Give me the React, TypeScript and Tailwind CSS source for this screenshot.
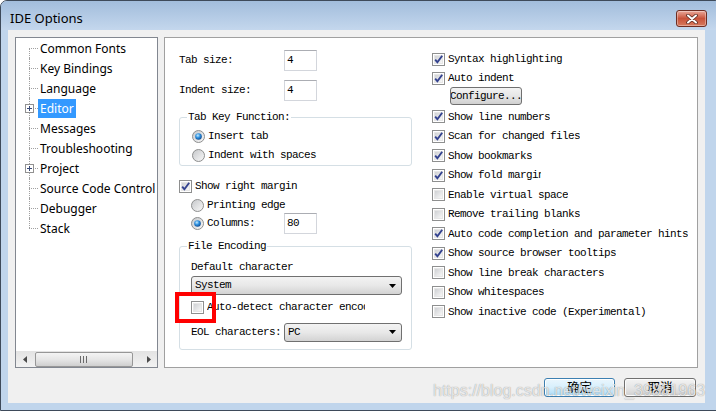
import React from "react";

const mono = "font-['Liberation_Mono',monospace] text-[11px] tracking-[-0.6px] text-black";
const ui = "font-['Noto_Sans',sans-serif]";

function CheckBox({ checked }: { checked?: boolean }) {
  return (
    <span className="relative flex h-[13px] w-[13px] shrink-0 items-center justify-center border border-[#8e8f8f] bg-white">
      <span className="h-[9px] w-[9px] border border-[#e6e6e6] bg-linear-to-br from-[#cfd1d4] to-[#f7f7f7]" />
      {checked && (
        <svg className="absolute left-[0px] top-[0px]" width="11" height="11" viewBox="0 0 11 11">
          <path d="M2.2 5.6 L4.4 8.3 L9.2 1.8" fill="none" stroke="#33428f" strokeWidth="1.9" />
        </svg>
      )}
    </span>
  );
}

function Radio({ checked }: { checked?: boolean }) {
  return (
    <svg width="13" height="13" viewBox="0 0 13 13" className="shrink-0">
      <defs>
        <linearGradient id="rg" x1="0" y1="0" x2="1" y2="1">
          <stop offset="0" stopColor="#c4c6c9" />
          <stop offset="1" stopColor="#fafafa" />
        </linearGradient>
        <radialGradient id="rd" cx="0.4" cy="0.35" r="0.75">
          <stop offset="0" stopColor="#c5ecff" />
          <stop offset="0.45" stopColor="#2b8fe0" />
          <stop offset="1" stopColor="#0b3a7a" />
        </radialGradient>
      </defs>
      <circle cx="6.5" cy="6.5" r="6" fill="url(#rg)" stroke="#8e8f8f" />
      {checked && <circle cx="6.5" cy="6.5" r="3.3" fill="url(#rd)" />}
    </svg>
  );
}

function NumBox({ value }: { value: string }) {
  return (
    <div className={`flex h-[21px] w-[33px] items-center border border-[#d3d6dc] border-t-[#abadb3] bg-white pl-[2px] ${mono}`}>
      {value}
    </div>
  );
}

function Combo({ value, w }: { value: string; w: string }) {
  return (
    <div
      className={`flex h-[19px] ${w} items-center justify-between rounded-[3px] border border-[#707070] bg-linear-to-b from-[#f3f3f3] via-[#e8e8e8] to-[#d3d3d3] pl-[3px] pr-[5px] ${mono}`}
    >
      <span>{value}</span>
      <svg width="7" height="4" viewBox="0 0 7 4">
        <path d="M0 0h7L3.5 4z" fill="#000" />
      </svg>
    </div>
  );
}

function Fieldset({ label, className, children }: { label: string; className?: string; children: React.ReactNode }) {
  return (
    <fieldset className={`rounded-[3px] border border-[#d5dfe5] ${className ?? ""}`}>
      <legend className={`ml-[7px] px-[1px] leading-[13px] ${mono}`}>{label}</legend>
      {children}
    </fieldset>
  );
}

const tree = [
  { label: "Common Fonts" },
  { label: "Key Bindings" },
  { label: "Language" },
  { label: "Editor", plus: true, selected: true },
  { label: "Messages" },
  { label: "Troubleshooting" },
  { label: "Project", plus: true },
  { label: "Source Code Control" },
  { label: "Debugger" },
  { label: "Stack" },
];

function Tree() {
  return (
    <div className="flex w-[143px] shrink-0 flex-col border border-[#828790] bg-white">
      <div className={`flex-1 overflow-hidden ${ui} text-[12px]`}>
        {tree.map((t, i) => {
          const vline =
            i === 0 ? "top-1/2 bottom-0" : i === tree.length - 1 ? "top-0 h-1/2" : "inset-y-0";
          return (
            <div key={t.label} className="flex h-5 items-center whitespace-nowrap">
              <div className="relative h-full w-[22px] shrink-0">
                <span className={`absolute left-[13px] border-l border-dotted border-[#a0a0a0] ${vline}`} />
                <span className="absolute left-[13px] top-1/2 w-[9px] border-t border-dotted border-[#a0a0a0]" />
                {t.plus && (
                  <svg className="absolute left-[9px] top-[6px]" width="9" height="9" viewBox="0 0 9 9">
                    <rect x="0.5" y="0.5" width="8" height="8" fill="#fff" stroke="#919191" />
                    <path d="M2 4.5h5M4.5 2v5" stroke="#3a4a78" />
                  </svg>
                )}
              </div>
              <span
                className={
                  t.selected
                    ? "bg-[#3399ff] px-[2px] leading-[19px] text-white"
                    : "px-[2px] leading-[19px] text-black"
                }
              >
                {t.label}
              </span>
            </div>
          );
        })}
      </div>
      <div className="flex h-[16px] shrink-0 items-center bg-linear-to-b from-[#e3e3e3] to-[#f2f2f2]">
        <div className="flex h-full w-[17px] items-center justify-center">
          <svg width="4" height="7" viewBox="0 0 4 7">
            <path d="M4 0v7L0 3.5z" fill="#4a4a4a" />
          </svg>
        </div>
        <div className="ml-[2px] flex h-[15px] w-[98px] items-center justify-center rounded-[2px] border border-[#979797] bg-linear-to-b from-[#f4f4f4] via-[#e6e6e6] to-[#cfcfcf]">
          <svg width="8" height="7" viewBox="0 0 8 7">
            <path d="M0.5 0v7M3.5 0v7M6.5 0v7" stroke="#6a6a6a" />
          </svg>
        </div>
        <div className="flex-1" />
        <div className="flex h-full w-[17px] items-center justify-center">
          <svg width="4" height="7" viewBox="0 0 4 7">
            <path d="M0 0v7L4 3.5z" fill="#4a4a4a" />
          </svg>
        </div>
      </div>
    </div>
  );
}

function LeftColumn() {
  return (
    <div className="flex w-[233px] shrink-0 flex-col">
      <div className="flex h-[22px] items-center">
        <span className={`w-[105px] ${mono}`}>Tab size:</span>
        <NumBox value="4" />
      </div>
      <div className="mt-[8px] flex h-[22px] items-center">
        <span className={`w-[105px] ${mono}`}>Indent size:</span>
        <NumBox value="4" />
      </div>
      <Fieldset label="Tab Key Function:" className="mt-[10px]">
        <div className="pl-[12px] pt-[3px]">
          <div className="flex h-[19px] items-center gap-[3px]">
            <Radio checked />
            <span className={mono}>Insert tab</span>
          </div>
          <div className="flex h-[19px] items-center gap-[3px]">
            <Radio />
            <span className={mono}>Indent with spaces</span>
          </div>
        </div>
      </Fieldset>
      <div className="mt-[11px] flex h-[19px] items-center gap-[3px]">
        <CheckBox checked />
        <span className={mono}>Show right margin</span>
      </div>
      <div className="flex h-[18px] items-center gap-[3px] pl-[12px]">
        <Radio />
        <span className={mono}>Printing edge</span>
      </div>
      <div className="flex h-[18px] items-center">
        <div className="flex w-[105px] items-center gap-[3px] pl-[12px]">
          <Radio checked />
          <span className={mono}>Columns:</span>
        </div>
        <NumBox value="80" />
      </div>
      <Fieldset label="File Encoding" className="mt-[8px]">
        <div className="pb-[7px] pl-[11px]">
          <div className={`mt-[6px] flex h-[16px] items-center ${mono}`}>Default character</div>
          <div className="mt-[1px]">
            <Combo value="System" w="w-[211px]" />
          </div>
          <div className="relative mt-[3px] flex h-[19px] w-[174px] items-center gap-[3px] overflow-visible">
            <CheckBox />
            <span className={`overflow-hidden whitespace-nowrap ${mono}`}>Auto-detect character encoding</span>
            <span className="pointer-events-none absolute left-[-16px] top-[-6px] h-[31px] w-[41px] border-[4px] border-[#ff0000]" />
          </div>
          <div className="mt-[5px] flex h-[20px] items-center">
            <span className={`w-[93px] ${mono}`}>EOL characters:</span>
            <Combo value="PC" w="w-[118px]" />
          </div>
        </div>
      </Fieldset>
    </div>
  );
}

function Opt({ checked, label, clip }: { checked?: boolean; label: string; clip?: string }) {
  return (
    <div className="flex h-[19.5px] items-center gap-[3px]">
      <CheckBox checked={checked} />
      <span className={`overflow-hidden whitespace-nowrap ${clip ?? ""} ${mono}`}>{label}</span>
    </div>
  );
}

function RightColumn() {
  return (
    <div className="flex flex-col pt-[1px]">
      <div className="flex h-[19px] items-center gap-[3px]">
        <CheckBox checked />
        <span className={mono}>Syntax highlighting</span>
      </div>
      <div className="flex h-[19px] items-center gap-[3px]">
        <CheckBox checked />
        <span className={mono}>Auto indent</span>
      </div>
      <div
        className={`ml-[18px] mt-[-1px] flex h-[18px] w-[72px] items-center justify-center overflow-hidden whitespace-nowrap rounded-[3px] border border-[#707070] bg-linear-to-b from-[#f3f3f3] via-[#e6e6e6] to-[#d0d0d0] ${mono}`}
      >
        Configure...
      </div>
      <div className="mt-[2px]" />
      <Opt checked label="Show line numbers" />
      <Opt checked label="Scan for changed files" />
      <Opt checked label="Show bookmarks" />
      <Opt checked label="Show fold margin" clip="w-[93px]" />
      <Opt label="Enable virtual space" />
      <Opt label="Remove trailing blanks" />
      <Opt checked label="Auto code completion and parameter hints" />
      <Opt checked label="Show source browser tooltips" />
      <Opt label="Show line break characters" />
      <Opt label="Show whitespaces" />
      <Opt label="Show inactive code (Experimental)" />
    </div>
  );
}

function CloseButton() {
  return (
    <div className="flex h-[17px] w-[31px] items-center justify-center rounded-[3px] border border-[#6e2d22] bg-linear-to-b from-[#e9a89a] via-[#c8523a] to-[#d77a5e] shadow-[inset_0_0_0_1px_rgba(255,255,255,0.35)]">
      <svg width="12" height="10" viewBox="0 0 12 10">
        <path d="M2 1.5 L10 8.5 M10 1.5 L2 8.5" stroke="#5a2a22" strokeWidth="3.6" strokeLinecap="round" />
        <path d="M2 1.5 L10 8.5 M10 1.5 L2 8.5" stroke="#ffffff" strokeWidth="2" strokeLinecap="round" />
      </svg>
    </div>
  );
}

export default function App() {
  return (
    <div className="h-[411px] w-[716px] overflow-hidden bg-white">
      <div className="flex h-[411px] w-[722px] flex-col rounded-t-[7px] border border-[#3e4a5a] bg-[#c0d5ec]">
        <div className="flex h-[29px] shrink-0 items-start justify-between rounded-t-[6px] bg-linear-to-b from-[#a2bddc] to-[#c4d7ed] pl-[9px] pr-[14px] pt-[9px]">
          <span className={`${ui} text-[13px] leading-[17px] text-black`}>IDE Options</span>
          <CloseButton />
        </div>
        <div className="relative mb-[7px] ml-[7px] mr-[16px] flex flex-1 flex-col bg-[#f0f0f0] px-[7px] pt-[7px]">
          <div className="flex h-[331px] gap-[6px]">
            <Tree />
            <div className="flex w-[536px] gap-[20px] border border-[#a0a0a0] bg-white pl-[14px] pt-[11px]">
              <LeftColumn />
              <RightColumn />
            </div>
          </div>
          <div className="mt-[10px] flex justify-end gap-[9px] pr-[2px]">
            <button className="flex h-[19px] w-[71px] items-center justify-center rounded-[3px] border border-[#3c7fb1] bg-linear-to-b from-[#eaf6fd] via-[#d7effc] to-[#a9daf5] font-['Noto_Sans_CJK_SC',sans-serif] text-[12.5px] leading-none text-black shadow-[inset_0_0_0_1px_#ffffff]">
              确定
            </button>
            <button className="flex h-[19px] w-[72px] items-center justify-center rounded-[3px] border border-[#707070] bg-linear-to-b from-[#f3f3f3] via-[#e6e6e6] to-[#d0d0d0] font-['Noto_Sans_CJK_SC',sans-serif] text-[12.5px] leading-none text-black shadow-[inset_0_0_0_1px_#fcfcfc]">
              取消
            </button>
          </div>
          <span className="pointer-events-none absolute left-[425px] top-[352px] whitespace-nowrap font-['Liberation_Sans',sans-serif] text-[16px] leading-[18px] text-white/75 [text-shadow:0_0_1px_rgba(0,0,0,0.45)]">
            https://blog.csdn.net/weixin_39881963
          </span>
        </div>
      </div>
    </div>
  );
}
